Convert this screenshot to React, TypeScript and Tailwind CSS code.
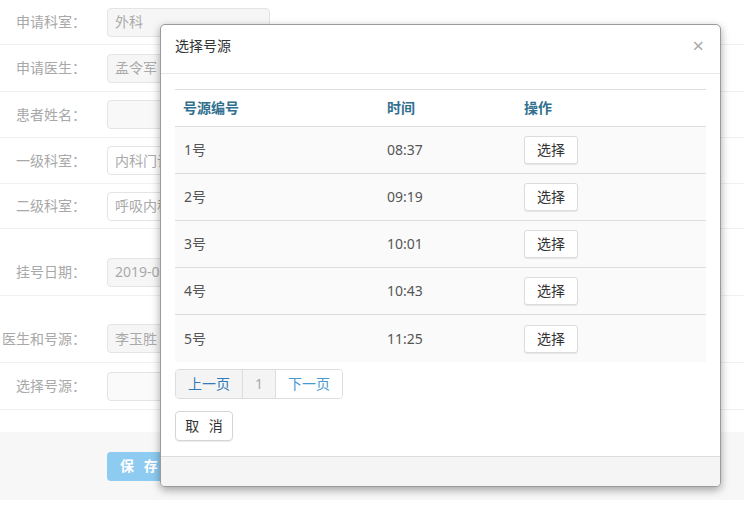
import React from 'react'

const font = { fontFamily: '"Noto Sans", "Noto Sans CJK SC", sans-serif' }

// background form rows, heights read off the page
const formRows = [
  { label: '申请科室：', value: '外科', h: 'h-[45px]', bg: 'bg-[#f6f6f6]' },
  { label: '申请医生：', value: '孟令军', h: 'h-[47px]', bg: 'bg-[#f6f6f6]' },
  { label: '患者姓名：', value: '', h: 'h-[46px]', bg: 'bg-[#f8f8f8]' },
  { label: '一级科室：', value: '内科门诊', h: 'h-[46px]', bg: 'bg-white' },
  { label: '二级科室：', value: '呼吸内科', h: 'h-[45px]', bg: 'bg-white' },
  { label: '挂号日期：', value: '2019-08-12', h: 'h-[67px] pt-[20px]', bg: 'bg-[#f6f6f6]' },
  { label: '医生和号源：', value: '李玉胜', h: 'h-[67px] pt-[19px]', bg: 'bg-[#f6f6f6]' },
  { label: '选择号源：', value: '', h: 'h-[47px]', bg: 'bg-[#fafafa]' },
]

const slots = [
  { no: '1号', time: '08:37' },
  { no: '2号', time: '09:19' },
  { no: '3号', time: '10:01' },
  { no: '4号', time: '10:43' },
  { no: '5号', time: '11:25' },
]

export default function App() {
  return (
    <div className="relative w-[744px] h-[520px] overflow-hidden bg-white text-[14px]" style={font}>
      {/* Form behind the dialog - faded */}
      <div className="flex flex-col">
        {formRows.map((row) => (
          <div key={row.label} className={`flex items-center border-b border-[#f0f0f0] ${row.h}`}>
            <span className="w-[86px] text-right text-[#a8a8a8] leading-[20px]">{row.label}</span>
            <div
              className={`ml-[21px] w-[163px] h-[29px] flex items-center px-[7px] rounded-[4px] border border-[#e4e4e4] text-[#aaaaaa] leading-[20px] ${row.bg}`}
            >
              {row.value}
            </div>
          </div>
        ))}
      </div>
      <div className="h-[22px]" />
      <div className="h-[68px] bg-[#f7f7f7] flex items-center pl-[107px]">
        <div className="w-[70px] h-[29px] rounded-[4px] bg-[#8ecbf0] text-white font-bold flex items-center pl-[13px] leading-[20px] tracking-[3px]">
          保 存
        </div>
      </div>

      {/* Dialog */}
      <div className="absolute left-[160px] top-[24px] w-[561px] h-[463px] bg-white border border-[#9a9a9a] rounded-[5px] shadow-[0_3px_8px_rgba(0,0,0,0.35)] flex flex-col overflow-hidden">
        <div className="h-[49px] shrink-0 flex items-center justify-between pl-[14px] pr-[16px] pb-[7px] border-b border-[#e8e8e8]">
          <span className="text-[#333] leading-[20px]">选择号源</span>
          <span className="text-[#aaa] text-[20px] leading-[20px]">×</span>
        </div>

        <div className="flex-1 px-[14px] pt-[15px]">
          <div className="border-t border-[#dddddd]">
            <div className="flex h-[37px] items-center border-b border-[#dddddd] text-[#31708f] font-bold leading-[20px]">
              <span className="w-[204px] pl-[8px]">号源编号</span>
              <span className="w-[137px] pl-[8px]">时间</span>
              <span className="pl-[8px]">操作</span>
            </div>
            {slots.map((s, i) => (
              <div
                key={s.no}
                className={`flex h-[47px] items-center bg-[#fafafa] text-[#555] leading-[20px] ${i < slots.length - 1 ? 'border-b border-[#dddddd]' : ''}`}
              >
                <span className="w-[204px] pl-[9px]">{s.no}</span>
                <span className="w-[137px] pl-[8px]">{s.time}</span>
                <span className="pl-[8px]">
                  <span className="inline-flex items-center justify-center w-[54px] h-[28px] bg-white border border-[#dcdcdc] rounded-[3px] shadow-[0_1px_1px_rgba(0,0,0,0.08)] text-[#333] leading-[20px]">
                    选择
                  </span>
                </span>
              </div>
            ))}
          </div>

          <div className="mt-[7px] inline-flex h-[30px] rounded-[4px] border border-[#dddddd] overflow-hidden leading-[20px]">
            <span className="w-[67px] flex items-center justify-center bg-[#f4f4f4] text-[#337ab7] border-r border-[#dddddd]">上一页</span>
            <span className="w-[33px] flex items-center justify-center bg-[#f4f4f4] text-[#aaa] border-r border-[#dddddd]">1</span>
            <span className="w-[66px] flex items-center justify-center bg-white text-[#4a9ad0]">下一页</span>
          </div>

          <div className="mt-[12px]">
            <span className="inline-flex items-center justify-center w-[58px] h-[30px] border border-[#d5d5d5] rounded-[4px] shadow-[0_1px_1px_rgba(0,0,0,0.08)] text-[#333] leading-[20px] tracking-[3px] pl-[3px]">
              取 消
            </span>
          </div>
        </div>

        <div className="h-[30px] shrink-0 bg-[#f5f5f5] border-t border-[#dddddd]" />
      </div>
    </div>
  )
}
